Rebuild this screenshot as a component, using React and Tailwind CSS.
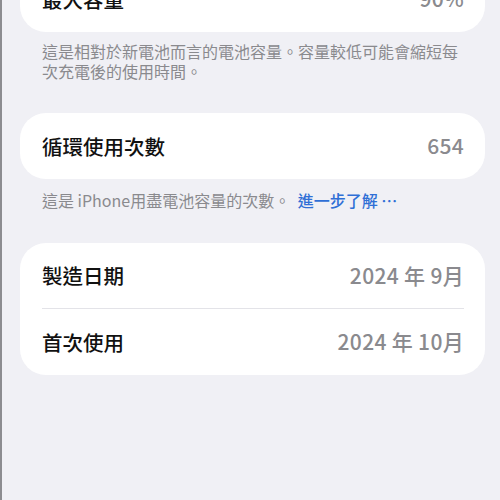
const font = { fontFamily: '"Noto Sans CJK TC", "Noto Sans", sans-serif' };

function Card({ children }) {
  return <div className="ml-[20px] mr-[15px] rounded-[26px] bg-white pl-[22px] pr-[21px]">{children}</div>;
}

function Row({ label, value, divider }) {
  return (
    <div className={`flex h-[66px] items-center justify-between ${divider ? 'border-b border-[#e3e3e8]' : ''}`}>
      <span className="text-[20.5px] font-medium text-[#111]">{label}</span>
      <span className="text-[21px] font-medium tracking-[0.015em] text-[#8a8a8e]">{value}</span>
    </div>
  );
}

export default function App() {
  return (
    <div className="flex h-[500px] w-[500px] overflow-hidden bg-[#f0f0f5]" style={font}>
      <div className="w-[2px] shrink-0 bg-[#8c8c90]" />
      <div className="flex-1 -ml-[2px]">
        <div className="-mt-[34px]">
          <Card>
            <Row label="最大容量" value="90%" />
          </Card>
        </div>
        <p className="ml-[42px] mr-[30px] mt-[9px] text-[16px] leading-[20px] text-[#8a8a8e]">
          這是相對於新電池而言的電池容量。容量較低可能會縮短每次充電後的使用時間。
        </p>
        <div className="mt-[32px]">
          <Card>
            <Row label="循環使用次數" value="654" />
          </Card>
        </div>
        <p className="mx-[42px] mt-[11px] text-[16px] leading-[20px] text-[#8a8a8e]">
          這是 iPhone用盡電池容量的次數。 <span className="ml-1 font-medium text-[#2f6fd6]">進一步了解 ⋯</span>
        </p>
        <div className="mt-[33px]">
          <Card>
            <Row label="製造日期" value="2024 年 9月" divider />
            <Row label="首次使用" value="2024 年 10月" />
          </Card>
        </div>
      </div>
    </div>
  );
}
